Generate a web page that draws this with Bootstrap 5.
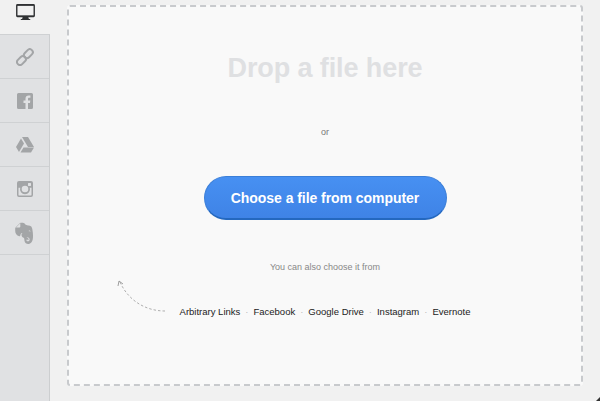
<!DOCTYPE html>
<html lang="en">
<head>
<meta charset="utf-8">
<title>Picker</title>
<link href="https://cdn.jsdelivr.net/npm/bootstrap@5.3.0/dist/css/bootstrap.min.css" rel="stylesheet">
<style>
html,body{height:401px;overflow:hidden}
body{background:#f1f1f1;font-family:"Liberation Sans",Arial,sans-serif;width:600px}
.shell{height:401px}
.side{width:50px;background:#e0e1e3;border-right:1px solid #ccced0;flex:none}
.tab{height:44px;border-bottom:1px solid #cfd1d3}
.tab-on{height:35px;padding-top:4px;background:#f1f1f1;border-bottom:1px solid #cfd1d3;margin-right:-1px}
.tab svg{fill:#a3a5a7}
.main{padding:5px 17px 15px 17px}
.zone{background:#f9f9f9;width:516px;height:381px;border:2px dashed #c8cacd;border-radius:3px}
.drop{font-size:27px;font-weight:700;color:#dfe0e2;line-height:32px;margin-top:45px;letter-spacing:-.1px}
.ortxt{font-size:9px;color:#777;line-height:12px;margin-top:42px}
.pick{width:243px;height:44px;margin-top:38px;border-radius:22px;border:1px solid #3b7fd8;border-bottom:2px solid #2468bf;background:linear-gradient(#4790f2,#3f83e6);color:#fff;font-size:14px;font-weight:700;padding:0;line-height:40px;letter-spacing:-.05px}
.pick:hover{background:linear-gradient(#4790f2,#3f83e6);color:#fff;border-color:#3b7fd8 #3b7fd8 #2468bf}
.alsotxt{font-size:9px;color:#888;line-height:12px;margin-top:41px}
.srcs{font-size:9.5px;line-height:14px;margin-top:32px;gap:5px}
.srcs a{color:#222;text-decoration:none}
.srcs span{color:#bbb}
.curve{position:absolute;left:100px;top:273px}
.grip{position:absolute;right:0;bottom:0;width:0;height:0;border-left:4px solid transparent;border-bottom:4px solid #333}
</style>
</head>
<body class="position-relative">
<div class="shell d-flex">
  <nav class="side d-flex flex-column">
    <div class="tab-on d-flex align-items-start justify-content-center">
      <svg width="19" height="17" viewBox="0 0 20 18" aria-label="Computer"><path fill="#2f3133" d="M1.500 0h17A1.500 1.500 0 0 1 20 1.500v11a1.500 1.500 0 0 1-1.500 1.500H13l.6 2H15v1H5v-1h1.400l.6-2H1.500A1.500 1.500 0 0 1 0 12.500v-11A1.500 1.500 0 0 1 1.500 0z"/><path fill="#f1f1f1" d="M1.500 2h17v10h-17z"/></svg>
    </div>
    <div class="tab d-flex align-items-center justify-content-center">
      <svg width="18" height="18" viewBox="0 0 18 18" aria-label="Link"><g fill="none" stroke="#a3a5a7" stroke-width="2"><rect x="-5.500" y="-3" width="10" height="6" rx="3" transform="translate(5.800 12.200) rotate(-45)"/><rect x="-4.500" y="-3" width="10" height="6" rx="3" transform="translate(12 6) rotate(-45)"/></g></svg>
    </div>
    <div class="tab d-flex align-items-center justify-content-center">
      <svg width="16" height="16" viewBox="0 0 16 16" aria-label="Facebook"><path d="M1.500 0h13A1.500 1.500 0 0 1 16 1.500v13a1.500 1.500 0 0 1-1.500 1.500H11V10h2l.3-2.500H11V6c0-.8.3-1.200 1.200-1.200h1.200V2.600c-.5-.1-1.100-.1-1.700-.1C9.700 2.500 8.500 3.700 8.500 5.700v1.800h-2V10h2v6h-7A1.500 1.500 0 0 1 0 14.500v-13A1.500 1.500 0 0 1 1.500 0z"/></svg>
    </div>
    <div class="tab d-flex align-items-center justify-content-center">
      <svg width="18" height="16" viewBox="0 0 18 16" aria-label="Google Drive"><path d="M6 0h6l6 10h-6z"/><path d="M5 1.500 8 6.600 3 15 0 10z"/><path d="M4.500 15.500l3-5h10.500l-3 5z"/></svg>
    </div>
    <div class="tab d-flex align-items-center justify-content-center">
      <svg width="16" height="16" viewBox="0 0 16 16" aria-label="Instagram"><path fill-rule="evenodd" d="M2 0h12a2 2 0 0 1 2 2v12a2 2 0 0 1-2 2H2a2 2 0 0 1-2-2V2a2 2 0 0 1 2-2zM1.500 6.800V14c0 .3.200.5.500.500h12c.3 0 .5-.2.500-.5V6.800h-1.700a5 5 0 1 1-9.600 0zM8 4.700a3.300 3.300 0 1 0 0 6.600 3.300 3.300 0 0 0 0-6.600zM11.500 2a.5.500 0 0 0-.5.500v2c0 .3.200.5.500.500h2c.3 0 .5-.2.500-.5v-2a.5.500 0 0 0-.5-.5z"/></svg>
    </div>
    <div class="tab d-flex align-items-center justify-content-center">
      <svg width="19" height="22" viewBox="0 0 19 22" aria-label="Evernote"><path d="M5 1 1 5c-.5.500-.8 1-.8 1.600v2.400c0 2.500 1.500 4.500 4 5.200.8 0 1.300-.6 1.300-1.500 0-1.200 1-1.700 2-1.700-.8.500-1 1.200-1 2 0 1.500 1.300 2.500 2.500 3 .5 1.500.3 3 1 4.300.8 1.500 2.700 2 4.500 1.400 2-.6 2.800-2.300 3.200-4.200.6-3 .3-7-.4-10.500-.4-2-1.200-3.200-3.300-3.500-1.200-.2-2.500-.3-3.300-.8C9.700 1.700 9 .8 7.800.8 7 .8 6 .7 5 1zM1 5.500h3.500c.5 0 .8-.3.800-.8V1.300zM14 8.500c.8 0 1.500.3 1.800 1-.7-.3-1.300-.4-2-.2 0-.4 0-.8.200-.8zM11.800 15.500c1.300-.3 2.800.3 2.800 1.900 0 1.200-.8 1.900-1.800 1.900-.8 0-1.300-.5-1.300-1.100 0-.6.500-1 1.100-.9-.3.200-.4.500-.2.700.3.300 1.200.1 1.200-.8 0-.9-1-1.300-1.800-1.100z" fill-rule="evenodd"/></svg>
    </div>
  </nav>
  <main class="main flex-grow-1">
    <section class="zone d-flex flex-column align-items-center text-center">
      <div class="drop">Drop a file here</div>
      <div class="ortxt">or</div>
      <button type="button" class="btn pick">Choose a file from computer</button>
      <div class="alsotxt">You can also choose it from</div>
      <div class="srcs d-flex">
        <a href="#">Arbitrary Links</a><span>·</span><a href="#">Facebook</a><span>·</span><a href="#">Google Drive</a><span>·</span><a href="#">Instagram</a><span>·</span><a href="#">Evernote</a>
      </div>
    </section>
  </main>
</div>
<svg class="curve" width="70" height="42" viewBox="0 0 70 42" aria-hidden="true"><path d="M65 38C45 38 28 27 20 9" fill="none" stroke="#9b9b9b" stroke-width=".8" stroke-dasharray="2.500 2"/><path d="M19 8l-1 5M19 8l4 3" fill="none" stroke="#888" stroke-width=".8"/></svg>
<div class="grip"></div>
</body>
</html>
